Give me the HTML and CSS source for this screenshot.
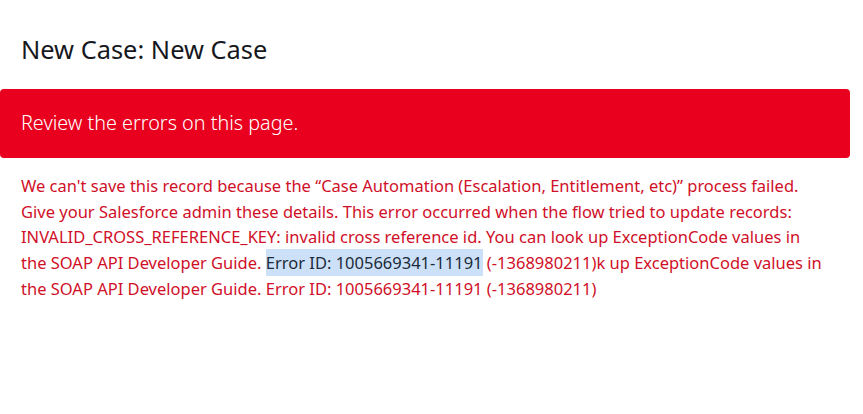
FILE: index.html
```html
<!DOCTYPE html>
<html>
<head>
<meta charset="utf-8">
<link rel="stylesheet" href="styles.css">
</head>
<body>
<div class="page">
  <h1 class="title">New Case: New Case</h1>
  <div class="banner">Review the errors on this page.</div>
  <p class="error">We can't save this record because the “Case Automation (Escalation, Entitlement, etc)” process failed.<br>Give your Salesforce admin these details. This error occurred when the flow tried to update records:<br>INVALID_CROSS_REFERENCE_KEY: invalid cross reference id. You can look up ExceptionCode values in<br>the SOAP API Developer Guide. <span class="sel">Error ID: 1005669341-11191</span> (-1368980211)k up ExceptionCode values in<br>the SOAP API Developer Guide. Error ID: 1005669341-11191 (-1368980211)</p>
</div>
</body>
</html>
```
FILE: styles.css
```css
html, body {
  margin: 0;
  padding: 0;
  background: #ffffff;
}
.page {
  width: 850px;
  font-family: "Noto Sans", "Open Sans", sans-serif;
}
.title {
  margin: 0;
  padding: 32px 21px 0;
  font-size: 25.4px;
  font-weight: 400;
  line-height: 34px;
  color: #16181d;
}
.banner {
  margin-top: 23px;
  height: 69px;
  box-sizing: border-box;
  padding: 20px 21px 0;
  background: #e8001e;
  border-radius: 4px;
  color: #ffffff;
  font-size: 19.8px;
  font-weight: 300;
  line-height: 28px;
}
.error {
  margin: 15px 0 0;
  padding: 0 21px;
  color: #d00f28;
  font-size: 16.5px;
  line-height: 25.7px;
  white-space: nowrap;
}
.sel {
  background: #cce1f7;
  color: #1c2a3a;
  padding: 2px 0;
}
```
